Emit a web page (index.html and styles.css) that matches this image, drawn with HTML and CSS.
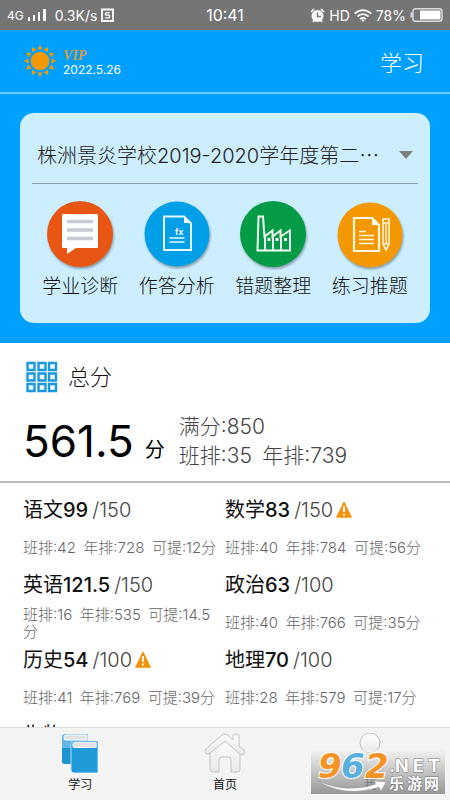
FILE: index.html
```html
<!DOCTYPE html>
<html lang="zh-CN">
<head>
<meta charset="utf-8">
<meta name="viewport" content="width=device-width, initial-scale=1">
<title>学习</title>
<link rel="stylesheet" href="styles.css">
</head>
<body>
<div class="status">
  <div class="status-side">
    <span class="network">4G</span>
    <svg width="18" height="14" viewBox="0 0 18 14" fill="#fff" aria-hidden="true"><path d="M0 9h2v4H0zM5 7h2v6H5zM10 4h2v9h-2zM15 1h3v12h-3z"/></svg>
    <span class="speed">0.3K/s</span>
    <svg class="sim" width="13" height="14" viewBox="0 0 13 14" fill="none" stroke="#fff" aria-hidden="true"><path stroke-width="1.800" d="M0 1.500h12v11.500H1V1.500"/><path stroke-width="1.300" d="M8.800 4.800H5.400Q4.300 4.800 4.300 6T5.400 7.200H7.600Q8.700 7.200 8.700 8.500T7.600 9.800H4.200"/></svg>
  </div>
  <span class="clock">10:41</span>
  <div class="status-side status-right">
    <svg width="15" height="15" viewBox="0 0 15 15" aria-hidden="true"><circle cx="7.500" cy="8" r="6" fill="#fff"/><path d="M1 4l3-3M14 4l-3-3M3 14l1.500-2M12 14l-1.500-2" stroke="#fff" stroke-width="1.700"/><path d="M7.500 4.500V8.500h3.500" stroke="#757575" stroke-width="1.500" fill="none"/></svg>
    <span>HD</span>
    <svg width="18" height="13" viewBox="0 0 18 13" fill="none" stroke="#fff" stroke-width="1.800" aria-hidden="true"><path d="M.7 4.600q8.300-7 16.600 0M3.400 7.500q5.600-4.700 11.200 0M6 10.100q3-2.500 6 0"/><path d="M7.200 11q1.800-1.400 3.600 0L9 13z" fill="#fff" stroke="none"/></svg>
    <span>78%</span>
    <svg width="33" height="14" viewBox="0 0 33 14" aria-hidden="true"><rect x="3" y=".7" width="29" height="12.600" rx="2.500" fill="#757575" stroke="#ddd" stroke-width="1.400"/><path d="M1.500 4.500v5" stroke="#ddd" stroke-width="2"/><path fill="#fff" d="M10 2.500h20.500v9H10z"/></svg>
  </div>
</div>

<header class="top">
  <svg width="34" height="34" viewBox="-17 -17 34 34" fill="#f39800" aria-hidden="true">
    <circle r="9.300"/>
    <g id="rays"><path id="ray" d="M-2.500-11.500h5L0-16.500z"/><use href="#ray" transform="rotate(30)"/><use href="#ray" transform="rotate(60)"/></g>
    <use href="#rays" transform="rotate(90)"/><use href="#rays" transform="rotate(180)"/><use href="#rays" transform="rotate(270)"/>
  </svg>
  <div class="member"><span class="vip">VIP</span><time>2022.5.26</time></div>
  <h1>学习</h1>
</header>

<main>
  <section class="hero">
    <div class="card">
      <div class="exam">
        <select aria-label="考试"><option>株洲景炎学校2019-2020学年度第二⋯</option></select>
      </div>
      <div class="tools">
        <a href="#diagnose">
          <svg viewBox="0 0 66 66" aria-hidden="true"><circle cx="33" cy="33" r="33" fill="#e95513"/><path d="M16 13h34q1 0 1 1v32q0 1-1 1H29l-9 6v-6h-4q-1 0-1-1V14q0-1 1-1z" fill="#fff"/><path d="M20 20.500h26M20 29h26M20 37.500h26" stroke="#c5ccd5" stroke-width="3.500"/></svg>
          学业诊断
        </a>
        <a href="#answers">
          <svg viewBox="0 0 66 66" aria-hidden="true"><circle cx="33" cy="33" r="32.500" fill="#009fe8"/><path d="M20 15.500h20l7 7V49H20z" fill="none" stroke="#e5faff" stroke-width="2"/><path d="M40 15v7h7z" fill="#fff"/><path d="M25.500 37h15M25.500 41h15" stroke="#e5faff" stroke-width="1.500"/><text x="31" y="33.500" class="fx">fx</text></svg>
          作答分析
        </a>
        <a href="#mistakes">
          <svg viewBox="0 0 66 66" aria-hidden="true"><circle cx="33" cy="33" r="33" fill="#039b45"/><path d="M17.500 49.500L18.500 15.500h4.500l1.500 20 8-6v6l8-6v6l9.500-6v20zM25 35v14M33 36v13M41 36v13" fill="none" stroke="#f2fff4" stroke-width="2"/><path d="M27.500 37h3v3h-3zM35.500 37h3v3h-3zM44 37h3v3h-3z" fill="#f2fff4"/></svg>
          错题整理
        </a>
        <a href="#practice">
          <svg viewBox="0 0 66 66" aria-hidden="true"><circle cx="33" cy="34" r="32.500" fill="#f39800"/><path d="M17 17h18l7 7v26H17z" fill="none" stroke="#fff8df" stroke-width="2.200"/><path d="M35 16v8h7z" fill="#fff"/><path d="M22 30.500h7M22 34.500h15M22 38.500h15M22 42.500h15" stroke="#fff8df" stroke-width="1.400"/><path d="M46 18h6v25l-3 6-3-6zM46 22h6M49 23v19M46 43h6" fill="none" stroke="#fff8df" stroke-width="1.500"/><path d="M47.500 46h3L49 50z" fill="#fff8df"/></svg>
          练习推题
        </a>
      </div>
    </div>
  </section>

  <section class="total">
    <h2>
      <svg width="32" height="32" viewBox="0 0 32 32" fill="#eefaff" stroke="#1998dc" stroke-width="2.400" aria-hidden="true"><path d="M1.500 2h7v7h-7zM12.500 2h7v7h-7zM23 2h7v7h-7zM1.500 12.500h7v7h-7zM12.500 12.500h7v7h-7zM23 12.500h7v7h-7zM1.500 23h7v7h-7zM12.500 23h7v7h-7zM23 23h7v7h-7z"/></svg>
      总分
    </h2>
    <div class="score-row">
      <p class="score"><strong>561.5</strong><span>分</span></p>
      <p class="ranks"><span>满分:850</span><span>班排:35&ensp;年排:739</span></p>
    </div>
  </section>

  <section class="subjects">
    <article><h3>语文<b>99</b><i>/150</i></h3><p><span>班排:42&ensp;年排:728&ensp;可提:12分</span></p></article>
    <article><h3>数学<b>83</b><i>/150</i><svg class="warn" viewBox="0 0 16 18" aria-label="预警" role="img"><path d="M8 1.500L15 16H1z" fill="#f39310" stroke="#f39310" stroke-width="1.500" stroke-linejoin="round"/><path d="M8 5v6M8 12.500v2" stroke="#fff" stroke-width="1.800"/></svg></h3><p><span>班排:40&ensp;年排:784&ensp;可提:56分</span></p></article>
    <article><h3>英语<b>121.5</b><i>/150</i></h3><p><span>班排:16&ensp;年排:535&ensp;可提:14.5分</span></p></article>
    <article><h3>政治<b>63</b><i>/100</i></h3><p><span>班排:40&ensp;年排:766&ensp;可提:35分</span></p></article>
    <article><h3>历史<b>54</b><i>/100</i><svg class="warn" viewBox="0 0 16 18" aria-label="预警" role="img"><path d="M8 1.500L15 16H1z" fill="#f39310" stroke="#f39310" stroke-width="1.500" stroke-linejoin="round"/><path d="M8 5v6M8 12.500v2" stroke="#fff" stroke-width="1.800"/></svg></h3><p><span>班排:41&ensp;年排:769&ensp;可提:39分</span></p></article>
    <article><h3>地理<b>70</b><i>/100</i></h3><p><span>班排:28&ensp;年排:579&ensp;可提:17分</span></p></article>
    <article><h3>生物</h3></article>
  </section>
</main>

<nav class="tabs">
  <a href="#study">
    <svg width="36" height="40" viewBox="0 0 36 40" aria-hidden="true"><path d="M3 1h23v7H10v23H3q-3 0-3-3V4q0-3 3-3z" fill="#62b8e6"/><path d="M0 15h9v16H3q-3 0-3-3z" fill="#1d94d2"/><path d="M4 2h21v5H4q-2 0-2-2.500T4 2z" fill="#e1e1e1" stroke="#fff"/><path d="M12 8h24v32H12q-3 0-3-3V11q0-3 3-3z" fill="#219ada" stroke="#d8f1ff" stroke-width=".8"/><path d="M9 15v-4q0-3 3-3h23v7z" fill="#62b8e6"/><path d="M13 9.500h21v5H13q-2 0-2-2.500t2-2.500z" fill="#e1e1e1" stroke="#fff"/></svg>
    学习
  </a>
  <a href="#home">
    <svg width="42" height="40" viewBox="0 0 42 40" aria-hidden="true"><defs><linearGradient id="pale" x2="0" y2="1"><stop stop-color="#fff"/><stop offset="1" stop-color="#e8e8e8"/></linearGradient></defs><g fill="url(#pale)" stroke="#c2c2c2"><path d="M6 17L21 4l15 13v19q0 3-3 3h-6V27q0-3-3-3h-6q-3 0-3 3v12H9q-3 0-3-3z"/><path d="M29 7V3q0-2 3-2t3 2v10l5 4q2 2 0 4t-4 0L21 8 6 20q-3 2-4.500 0t.5-4L18 2q3-2 6 0z"/></g></svg>
    首页
  </a>
  <a href="#me">
    <svg width="42" height="40" viewBox="0 0 42 40" aria-hidden="true"><g fill="url(#pale)" stroke="#c2c2c2"><path d="M8 39v-8q0-10 13-10t13 10v8z"/><circle cx="21" cy="10" r="10"/></g></svg>
    我
  </a>
  <div class="mark">
    <svg width="134" height="44" viewBox="0 0 134 44" role="img" aria-label="962.NET 乐游网">
      <defs><linearGradient id="shade" x2="0" y2="1"><stop stop-color="#f2f2f2"/><stop offset="1" stop-color="#777"/></linearGradient></defs>
      <path d="M0 0h134v44H0z" fill="url(#shade)" opacity=".75"/>
      <path d="M7 31q29 13 58 3l-2-3 12 1-5 9-2-4Q34 48 7 31z" fill="#fff" stroke="#999" stroke-width=".5"/>
      <g class="digits"><text x="7" y="28" fill="#f39326">9</text><text x="30" y="28" fill="#58b0df">6</text><text x="54" y="28" fill="#f39326">2</text></g>
      <text x="78" y="22" class="net">.</text><text x="84" y="22" class="net">N</text><text x="102" y="22" class="net">E</text><text x="117" y="22" class="net">T</text>
      <text x="78" y="39" class="site">乐</text><text x="96" y="39" class="site">游</text><text x="113" y="39" class="site">网</text>
    </svg>
  </div>
</nav>
</body>
</html>
```
FILE: styles.css
```css
* { box-sizing: border-box; }
body {
  margin: 0;
  height: 100vh;
  display: flex;
  flex-direction: column;
  background: #fff;
  color: #111;
  font-family: Inter, "Noto Sans CJK SC", sans-serif;
  font-weight: 300;
}
h1, h2, h3, p { margin: 0; font-weight: 300; }
a { color: inherit; text-decoration: none; }
svg { display: block; flex: none; }

.status {
  flex: none;
  height: 30px;
  padding: 0 7px;
  display: flex;
  align-items: center;
  background: #757575;
  color: #fff;
  font-size: 14px;
  font-weight: 400;
}
.status-side { flex: 1; display: flex; align-items: center; gap: 4px; }
.status-right { justify-content: flex-end; }
.network { font-size: 12px; }
.speed { margin-left: 5px; }
.clock { font-size: 16px; }

.top {
  flex: none;
  height: 64px;
  padding: 0 26px 0 23px;
  display: flex;
  align-items: center;
  gap: 6px;
  background: #00a0ff;
  border-bottom: 2px solid #66c8ff;
  color: #fff;
}
.member { flex: 1; padding-top: 4px; font-size: 12px; line-height: 14px; font-weight: 400; }
.vip {
  display: block;
  color: #d79a3c;
  font: italic bold 14px/14px "Liberation Serif", serif;
}
.top h1 { font-size: 22px; }

main { flex: 1; min-height: 0; overflow: hidden; }
.hero { padding: 19px 20px 20px; background: #00a0ff; }
.card {
  height: 210px;
  padding: 14px 12px 0;
  background: #cdeeff;
  border-radius: 14px;
}
.exam { position: relative; border-bottom: 1px solid #87a0ad; }
.exam::after {
  content: "";
  position: absolute;
  right: 5px;
  top: 24px;
  border: 7px solid transparent;
  border-top: 8px solid #808080;
  border-bottom: 0;
}
select {
  display: block;
  width: 100%;
  height: 56px;
  padding: 2px 24px 0 5px;
  appearance: none;
  border: 0;
  background: none;
  color: #222;
  font: inherit;
  font-size: 20px;
}
.tools { display: grid; grid-template-columns: repeat(4, 1fr); padding-top: 17px; }
.tools a {
  display: flex;
  flex-direction: column;
  align-items: center;
  gap: 6px;
  font-size: 19px;
  line-height: 28px;
  white-space: nowrap;
}
.tools svg {
  width: 66px;
  height: 66px;
  overflow: visible;
  filter: drop-shadow(1px 2px 1px #0005);
}
.fx { fill: #fff; font-size: 9px; font-weight: 700; }

.total { padding: 17px 26px 0; border-bottom: 2px solid #bbb; }
.total h2 { display: flex; align-items: center; gap: 10px; font-size: 22px; line-height: 34px; }
.score-row { display: flex; gap: 14px; padding: 18px 0 2px; }
.score { display: flex; align-items: baseline; gap: 11px; margin-left: -3px; line-height: 58px; color: #000; }
.score strong { font-size: 44px; font-weight: 400; }
.score span { font-size: 20px; font-weight: 400; }
.ranks { color: #444; font-size: 21px; line-height: 29px; }
.ranks span { display: block; }

.subjects {
  display: grid;
  grid-template-columns: repeat(2, 1fr);
  grid-auto-rows: 75px;
  column-gap: 4px;
  padding: 12px 27px 0 23px;
}
.subjects h3 { display: flex; align-items: center; font-size: 20px; line-height: 30px; font-weight: 400; color: #111; }
.subjects b { font-weight: 500; }
.subjects i { font-style: normal; font-weight: 300; color: #444; margin-left: 4px; }
.warn { width: 16px; height: 18px; margin-left: 3px; }
.subjects p {
  height: 45px;
  display: flex;
  align-items: center;
  color: #666;
  font-size: 15px;
  line-height: 17px;
}

.tabs {
  position: relative;
  flex: none;
  height: 73px;
  padding: 5px 8px 0;
  display: grid;
  grid-template-columns: repeat(3, 1fr);
  background: #f4f4f4;
  border-top: 1px solid #ddd;
}
.tabs a {
  display: flex;
  flex-direction: column;
  align-items: center;
  gap: 3px;
  font-size: 12px;
  line-height: 18px;
  font-weight: 400;
}
.mark { position: absolute; right: 5px; bottom: 6px; }
.digits { font: italic bold 34px "DejaVu Sans", sans-serif; stroke: #fff; stroke-width: 2px; paint-order: stroke; }
.net, .site { fill: #fff; stroke: #777; stroke-width: 1px; paint-order: stroke; font-weight: 700; }
.net { font-size: 18px; }
.site { font-size: 15px; }
```
